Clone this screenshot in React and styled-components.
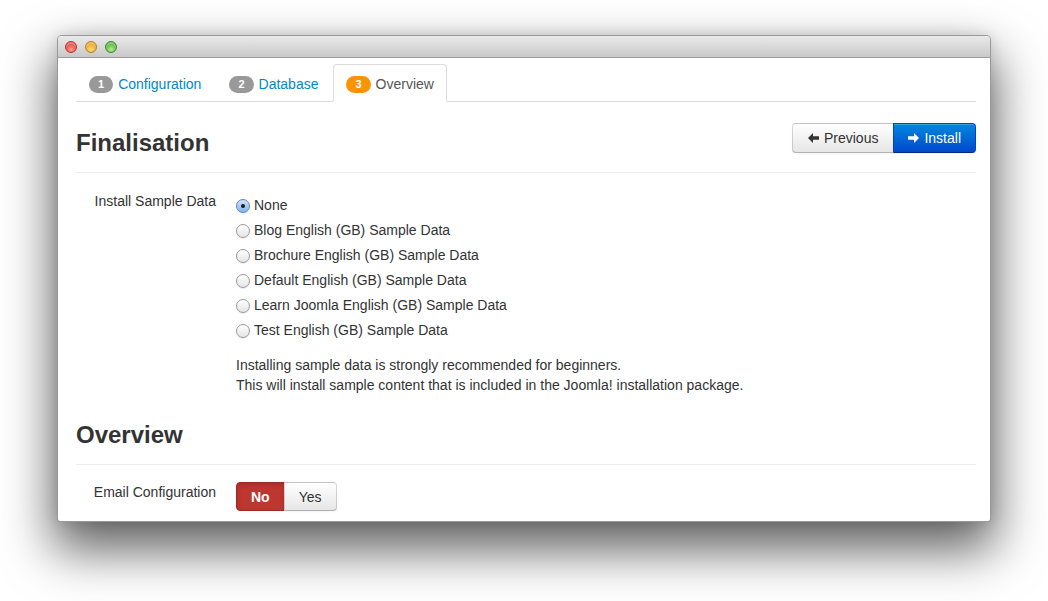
import React, { useState } from "react";
import styled, { createGlobalStyle, css } from "styled-components";

const GlobalStyle = createGlobalStyle`
  html, body {
    margin: 0;
    padding: 0;
    background: #ffffff;
    font-family: "Liberation Sans", Arial, sans-serif;
    font-size: 14px;
    color: #333333;
  }
`;

const Stage = styled.div`
  width: 1048px;
  height: 601px;
  padding: 35px 57px 0;
  box-sizing: border-box;
  overflow: hidden;
`;

const Window = styled.div`
  width: 934px;
  height: 487px;
  box-sizing: border-box;
  border: 1px solid rgba(0, 0, 0, 0.4);
  border-radius: 5px 5px 3px 3px;
  background: #ffffff;
  box-shadow: 0 24px 50px 4px rgba(0, 0, 0, 0.62), 0 0 14px rgba(0, 0, 0, 0.12);
  overflow: hidden;
  display: flex;
  flex-direction: column;
`;

const TitleBar = styled.div`
  height: 21px;
  flex-shrink: 0;
  display: flex;
  align-items: center;
  gap: 8px;
  padding-left: 7px;
  background: linear-gradient(#e9e9e9, #d6d6d6 60%, #c9c9c9);
  border-bottom: 1px solid #9e9e9e;
`;

const Light = styled.span`
  width: 12px;
  height: 12px;
  border-radius: 50%;
  box-sizing: border-box;
  border: 1px solid ${(p) => p.$edge};
  background: radial-gradient(circle at 50% 75%, ${(p) => p.$hi} 0%, ${(p) => p.$color} 70%);
  box-shadow: inset 0 2px 1px rgba(255, 255, 255, 0.35);
`;

const Content = styled.div`
  padding: 6px 14px 0 18px;
`;

const Tabs = styled.ul`
  display: flex;
  list-style: none;
  margin: 0;
  padding: 0;
  border-bottom: 1px solid #dddddd;
`;

const Tab = styled.li`
  margin-right: 2px;
  margin-bottom: -1px;
  padding: 9px 12px 7px;
  line-height: 20px;
  border: 1px solid transparent;
  border-radius: 4px 4px 0 0;
  display: flex;
  align-items: center;
  gap: 5px;
  color: #0088cc;
  ${(p) =>
    p.$active &&
    css`
      color: #555555;
      background: #ffffff;
      border-color: #dddddd #dddddd transparent;
    `}
`;

const Badge = styled.span`
  display: inline-block;
  padding: 0 9px;
  height: 17px;
  line-height: 17px;
  border-radius: 9px;
  font-size: 11px;
  font-weight: bold;
  color: #ffffff;
  background: ${(p) => (p.$active ? "#f89406" : "#999999")};
`;

const SectionHeader = styled.div`
  display: flex;
  justify-content: space-between;
  align-items: flex-start;
  padding: ${(p) => (p.$first ? "21px" : "20px")} 0 9px;
  border-bottom: 1px solid #eeeeee;
`;

const Heading = styled.h3`
  margin: 0;
  font-size: 24px;
  line-height: 40px;
  font-weight: bold;
  color: #333333;
`;

const ButtonGroup = styled.div`
  display: flex;
`;

const Button = styled.button`
  font-family: "Liberation Sans", Arial, sans-serif;
  font-size: 14px;
  height: ${(p) => p.$h || 30}px;
  padding: 0 ${(p) => p.$px || 12}px;
  display: flex;
  align-items: center;
  gap: 5px;
  border: 1px solid rgba(0, 0, 0, 0.15);
  border-bottom-color: rgba(0, 0, 0, 0.3);
  margin-left: -1px;
  cursor: pointer;
  color: #333333;
  background: linear-gradient(#ffffff, #e6e6e6);
  box-shadow: inset 0 1px 0 rgba(255, 255, 255, 0.2), 0 1px 2px rgba(0, 0, 0, 0.05);
  &:first-child {
    margin-left: 0;
    border-radius: 4px 0 0 4px;
  }
  &:last-child {
    border-radius: 0 4px 4px 0;
  }
  ${(p) =>
    p.$variant === "primary" &&
    css`
      color: #ffffff;
      background: linear-gradient(#0088dd, #0048cc);
      border-color: #0044cc #0044cc #002a80;
    `}
  ${(p) =>
    p.$variant === "danger" &&
    css`
      color: #ffffff;
      font-weight: bold;
      background: #bd362f;
      border-color: #a02a24;
      box-shadow: inset 0 2px 4px rgba(0, 0, 0, 0.15);
    `}
`;

const ControlGroup = styled.div`
  display: flex;
  padding-top: ${(p) => p.$pt || 14}px;
`;

const ControlLabel = styled.label`
  width: 140px;
  flex-shrink: 0;
  text-align: right;
  padding-top: 5px;
  line-height: 18px;
`;

const Controls = styled.div`
  margin-left: 20px;
  padding-top: ${(p) => p.$pt || 0}px;
`;

const RadioRow = styled.label`
  display: flex;
  align-items: center;
  gap: 4px;
  height: 25px;
  line-height: 25px;
  cursor: pointer;
`;

const RadioDot = styled.span`
  width: 14px;
  height: 14px;
  box-sizing: border-box;
  border-radius: 50%;
  border: 1px solid #9a9a9a;
  background: linear-gradient(#ffffff, #e4e4e4);
  box-shadow: 0 1px 1px rgba(0, 0, 0, 0.08);
  display: flex;
  align-items: center;
  justify-content: center;
  ${(p) =>
    p.$checked &&
    css`
      border-color: #5a86c8;
      background: linear-gradient(#cfe3fa, #86b3ea);
      &::after {
        content: "";
        width: 4px;
        height: 4px;
        border-radius: 50%;
        background: #1a1a1a;
      }
    `}
`;

const Help = styled.p`
  margin: 12px 0 0;
  line-height: 20px;
`;

const ArrowIcon = ({ dir }) => (
  <svg width="11" height="10" viewBox="0 0 11 10">
    <polygon
      fill="currentColor"
      points={
        dir === "left"
          ? "0,5 5,0 5,3.2 11,3.2 11,6.8 5,6.8 5,10"
          : "11,5 6,0 6,3.2 0,3.2 0,6.8 6,6.8 6,10"
      }
    />
  </svg>
);

const sampleOptions = [
  "None",
  "Blog English (GB) Sample Data",
  "Brochure English (GB) Sample Data",
  "Default English (GB) Sample Data",
  "Learn Joomla English (GB) Sample Data",
  "Test English (GB) Sample Data",
];

export default function App() {
  const [sample, setSample] = useState(0);
  const [email, setEmail] = useState(false);

  return (
    <>
      <GlobalStyle />
      <Stage>
        <Window>
          <TitleBar>
            <Light $color="#e2463f" $hi="#ff9d8f" $edge="#b5322d" />
            <Light $color="#e6a325" $hi="#ffdc7a" $edge="#b97f1c" />
            <Light $color="#53b23d" $hi="#b6ec8c" $edge="#3c8a2c" />
          </TitleBar>
          <Content>
            <Tabs>
              <Tab>
                <Badge>1</Badge>Configuration
              </Tab>
              <Tab>
                <Badge>2</Badge>Database
              </Tab>
              <Tab $active>
                <Badge $active>3</Badge>Overview
              </Tab>
            </Tabs>

            <SectionHeader $first>
              <Heading>Finalisation</Heading>
              <ButtonGroup>
                <Button $px={15}>
                  <ArrowIcon dir="left" />
                  Previous
                </Button>
                <Button $variant="primary" $px={14}>
                  <ArrowIcon dir="right" />
                  Install
                </Button>
              </ButtonGroup>
            </SectionHeader>

            <ControlGroup>
              <ControlLabel>Install Sample Data</ControlLabel>
              <Controls $pt={6}>
                {sampleOptions.map((opt, i) => (
                  <RadioRow key={opt} onClick={() => setSample(i)}>
                    <RadioDot $checked={sample === i} />
                    {opt}
                  </RadioRow>
                ))}
                <Help>
                  Installing sample data is strongly recommended for beginners.
                  <br />
                  This will install sample content that is included in the Joomla! installation package.
                </Help>
              </Controls>
            </ControlGroup>

            <SectionHeader>
              <Heading>Overview</Heading>
            </SectionHeader>

            <ControlGroup $pt={13}>
              <ControlLabel>Email Configuration</ControlLabel>
              <Controls $pt={4}>
                <ButtonGroup>
                  <Button
                    $h={29}
                    $px={14}
                    $variant={email ? undefined : "danger"}
                    onClick={() => setEmail(false)}
                  >
                    No
                  </Button>
                  <Button
                    $h={29}
                    $px={14}
                    $variant={email ? "primary" : undefined}
                    onClick={() => setEmail(true)}
                  >
                    Yes
                  </Button>
                </ButtonGroup>
              </Controls>
            </ControlGroup>
          </Content>
        </Window>
      </Stage>
    </>
  );
}
